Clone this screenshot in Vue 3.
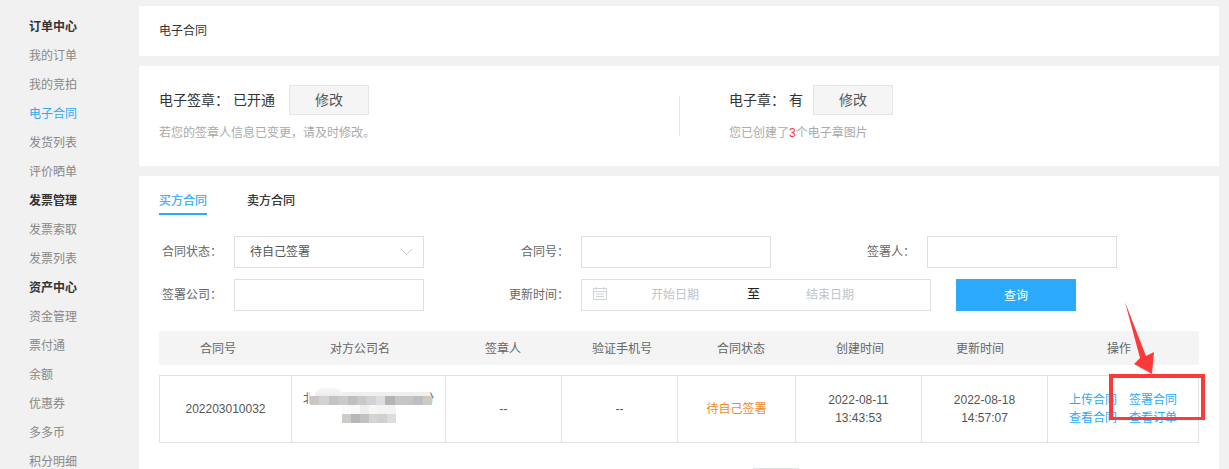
<script setup>
const menu = [
  { t: '订单中心', h: 1 }, { t: '我的订单' }, { t: '我的竞拍' }, { t: '电子合同', a: 1 }, { t: '发货列表' }, { t: '评价晒单' },
  { t: '发票管理', h: 1 }, { t: '发票索取' }, { t: '发票列表' },
  { t: '资产中心', h: 1 }, { t: '资金管理' }, { t: '票付通' }, { t: '余额' }, { t: '优惠券' }, { t: '多多币' }, { t: '积分明细' }
]
const heads = ['合同号', '对方公司名', '签章人', '验证手机号', '合同状态', '创建时间', '更新时间', '操作']
const blur1 = ['#c9c6c3', '#d0d2d4', '#c3c3c4', '#c8cacc', '#c0bebd', '#c9c9ca', '#d2d2d4', '#dcdde0', '#b5b4b4', '#c6c5c5', '#c6c5c5', '#bdbec0', '#cdcac6']
const blur2 = ['#cdccc9', '#b8b7b7', '#c1c2c4', '#d5d4d3', '#d0d0d1', '#dcdde0']
const blur3 = ['#fbfbfb', '#f9f8f8', '#eceef0', '#f6f6f7', '#f4f3f3', '#f3f3f4']
</script>

<template>
  <div class="page">
    <aside class="side">
      <div v-for="m in menu" :key="m.t" class="mi" :class="{ hd: m.h, on: m.a }">{{ m.t }}</div>
    </aside>
    <main class="main">
      <div class="card crumb">电子合同</div>
      <div class="card sign">
        <div class="half left">
          <div class="row"><span class="lb">电子签章：</span><span class="val">已开通</span><button class="mod">修改</button></div>
          <p class="tip">若您的签章人信息已变更，请及时修改。</p>
        </div>
        <div class="half right">
          <div class="row"><span class="lb">电子章：</span><span class="val">有</span><button class="mod">修改</button></div>
          <p class="tip">您已创建了<em>3</em>个电子章图片</p>
        </div>
      </div>
      <div class="card body">
        <div class="tabs">
          <span class="tab cur">买方合同</span>
          <span class="tab">卖方合同</span>
        </div>
        <div class="form">
          <div class="frow">
            <label class="l1">合同状态：</label>
            <div class="box sel"><span>待自己签署</span>
              <svg class="chev" width="13" height="8" viewBox="0 0 13 8"><path d="M1 1l5.500 5.500L12 1" fill="none" stroke="#c8ccd4" stroke-width="1"/></svg>
            </div>
            <label class="l2">合同号：</label>
            <div class="box"></div>
            <label class="l3">签署人：</label>
            <div class="box"></div>
          </div>
          <div class="frow">
            <label class="l1">签署公司：</label>
            <div class="box"></div>
            <label class="l2">更新时间：</label>
            <div class="box date">
              <svg class="cal" width="14" height="13" viewBox="0 0 14 13"><path d="M.5 1.500h13v11H.5zM3.500 0v3M10.500 0v3M.5 4.500h13M3 7h8M3 9.500h8" fill="none" stroke="#cfd3da"/></svg>
              <span class="ph p1">开始日期</span><span class="to">至</span><span class="ph p2">结束日期</span>
            </div>
            <button class="query">查询</button>
          </div>
        </div>
        <div class="thead">
          <div v-for="h in heads" :key="h" class="th">{{ h }}</div>
        </div>
        <div class="tbody">
          <div class="td">202203010032</div>
          <div class="td co">
            <span class="ch c1">北</span>
            <span class="ch c2">份</span>
            <span class="mosaic mask"></span>
            <span class="mosaic m0a"></span>
            <span class="mosaic m0b"></span>
            <span class="mosaic m1"><i v-for="(c, i) in blur1" :key="i" :style="{ background: c }"></i></span>
            <span class="mosaic m3"><i v-for="(c, i) in blur3" :key="i" :style="{ background: c }"></i></span>
            <span class="mosaic m2"><i v-for="(c, i) in blur2" :key="i" :style="{ background: c }"></i></span>
          </div>
          <div class="td">--</div>
          <div class="td">--</div>
          <div class="td status">待自己签署</div>
          <div class="td">2022-08-11<br>13:43:53</div>
          <div class="td">2022-08-18<br>14:57:07</div>
          <div class="td ops"><a>上传合同</a><a>签署合同</a><a>查看合同</a><a>查看订单</a></div>
        </div>
        <div class="pager"></div>
        <svg class="mark" width="40" height="80" viewBox="0 0 40 80">
          <path d="M5 2L26 56L34 52L32 74L14 64L20 58Z" fill="#fd3a3a"/>
        </svg>
        <div class="redbox"></div>
      </div>
    </main>
  </div>
</template>

<style>
html, body { margin: 0; background: #f1f1f1; overflow: hidden; }
</style>
<style scoped>
.page { display: flex; width: 1229px; height: 469px; overflow: hidden; background: #f1f1f1; font-family: "Liberation Sans", "Noto Sans CJK SC", sans-serif; font-size: 12px; color: #666; }
.side { width: 139px; flex: none; padding-top: 13px; box-sizing: border-box; }
.mi { height: 29px; line-height: 29px; padding-left: 29px; color: #888; white-space: nowrap; }
.mi.hd { color: #333; font-weight: 700; }
.mi.on { color: #2baafc; }
.main { width: 1080px; flex: none; padding-top: 6px; }
.card { background: #fff; }
.crumb { height: 50px; line-height: 50px; padding-left: 20px; color: #333; margin-bottom: 10px; }
.sign { height: 100px; display: flex; margin-bottom: 10px; }
.half { box-sizing: border-box; padding-top: 19px; }
.left { width: 540px; padding-left: 20px; position: relative; }
.left::after { content: ""; position: absolute; left: 540px; top: 30px; width: 1px; height: 40px; background: #e4e4e4; }
.right { padding-left: 50px; }
.row { display: flex; align-items: center; height: 30px; color: #333; font-size: 14px; }
.lb { margin-right: 4px; margin-bottom: 2px; }
.val { margin-bottom: 2px; }
.mod { width: 80px; height: 30px; margin-left: 10px; box-sizing: border-box; border: 1px solid #e6e6e6; background: #f5f5f5; color: #555; font: inherit; padding: 0 0 2px; }
.left .mod { margin-left: 14px; }
.tip { margin: 10px 0 0; color: #aaa; font-size: 12px; line-height: 16px; }
.tip em { font-style: normal; color: #f33; }
.body { height: 293px; position: relative; padding: 0 20px; }
.tabs { display: flex; height: 39px; }
.tab { margin-right: 40px; height: 39px; box-sizing: border-box; line-height: 50px; color: #222; -webkit-text-stroke: .2px currentColor; }
.tab.cur { color: #2baafc; border-bottom: 2px solid #2baafc; }
.form { display: flex; flex-direction: column; gap: 11px; margin-top: 21px; }
.frow { display: flex; align-items: center; height: 32px; }
.frow label { box-sizing: border-box; color: #666; text-align: right; padding-right: 12px; white-space: nowrap; margin-bottom: 4px; }
.l1 { width: 75px; }
.l2 { width: 157px; }
.l3 { width: 156px; }
.box { box-sizing: border-box; width: 190px; height: 32px; border: 1px solid #dcdfe6; position: relative; }
.sel { line-height: 30px; padding-left: 15px; color: #555; }
.chev { position: absolute; right: 10px; top: 11px; }
.box.date { width: 350px; display: flex; align-items: center; }
.cal { margin: 0 0 3px 11px; }
.ph { color: #c0c4cc; margin-bottom: 3px; }
.p1 { margin-left: 44px; }
.to { color: #222; margin-left: 48px; font-size: 13px; margin-bottom: 5px; }
.p2 { margin-left: 46px; }
.query { width: 120px; height: 32px; border: 0; background: #2baafc; color: #fff; font: inherit; padding: 0 0 2px; margin-left: 25px; }
.thead { display: grid; grid-template-columns: 118px 166px 120px 118px 120px 118px 122px 158px; background: #f4f4f4; height: 34px; margin-top: 20px; width: 1040px; }
.th { display: flex; align-items: center; justify-content: center; color: #666; padding-bottom: 2px; }
.th:last-child { padding-right: 2px; }
.tbody { display: grid; grid-template-columns: 132px 154px 116px 116px 118px 126px 126px 151px; height: 68px; margin-top: 10px; width: 1040px; box-sizing: border-box; border: 1px solid #e2e2e2; border-left: 0; }
.td { display: flex; flex-direction: column; align-items: center; justify-content: center; text-align: center; line-height: 18px; border-left: 1px solid #e2e2e2; position: relative; color: #555; }
.status { color: #f28a1c; }
.td.ops { display: grid; grid-template-columns: 60px 60px; justify-content: center; justify-items: center; align-content: center; line-height: 18px; color: #2baafc; }
.ch { position: absolute; top: 14px; color: #666; line-height: 18px; }
.c1 { left: 11px; }
.c2 { left: 130px; }
.mosaic { position: absolute; display: flex; }
.mask { left: 18px; top: 14px; width: 6px; height: 18px; background: #fff; }
.m0a { left: 23px; top: 12px; width: 27px; height: 8px; background: linear-gradient(#f7f7f7, #ececed); border-radius: 8px 8px 0 0; }
.m0b { left: 50px; top: 16px; width: 88px; height: 4px; background: #efeff0; }
.m1 { left: 18px; top: 20px; width: 122px; height: 9px; }
.m1 i { display: block; flex: 1; height: 9px; }
.m3 { left: 50px; top: 29px; }
.m2 { left: 50px; top: 38px; }
.m2 i, .m3 i { display: block; width: 9px; height: 9px; }
.pager { position: absolute; left: 614px; top: 292px; width: 46px; height: 1px; background: #e0e0e8; }
.mark { position: absolute; left: 981px; top: 124px; }
.redbox { position: absolute; left: 970px; top: 198px; width: 96px; height: 46px; box-sizing: border-box; border: 3px solid #fd3a3a; border-width: 4px 4px 3px 4px; }
</style>
